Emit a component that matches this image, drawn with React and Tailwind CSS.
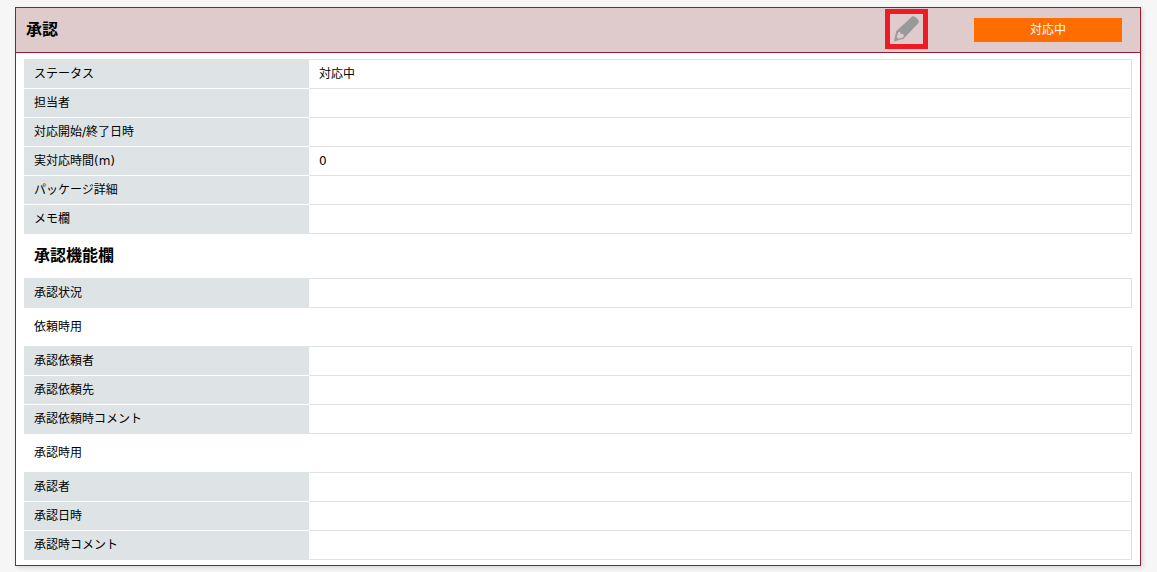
import React from 'react';

const basicRows = [
  { label: 'ステータス', value: '対応中' },
  { label: '担当者', value: '' },
  { label: '対応開始/終了日時', value: '' },
  { label: '実対応時間(m)', value: '0' },
  { label: 'パッケージ詳細', value: '' },
  { label: 'メモ欄', value: '' },
];

const statusRows = [{ label: '承認状況', value: '' }];

const requestRows = [
  { label: '承認依頼者', value: '' },
  { label: '承認依頼先', value: '' },
  { label: '承認依頼時コメント', value: '' },
];

const approvalRows = [
  { label: '承認者', value: '' },
  { label: '承認日時', value: '' },
  { label: '承認時コメント', value: '' },
];

function PencilIcon() {
  return (
    <svg width="25" height="26" viewBox="0 0 25 26" aria-hidden="true">
      <path
        fill="#999"
        fillRule="evenodd"
        d="M0 25.4 L2.2 15.2 L17.6 1 Q19.4 -0.6 21.2 1 L24.2 3.8 Q25.6 5.6 24 7.6 L9.6 22.8 Z M4 16.6 L2.7 21.4 L4.2 22.8 L9 21.4 L10 19 L8.2 17.6 L6.6 18.4 L6.2 15.8 Z"
      />
    </svg>
  );
}

function DetailTable({ label, rows }) {
  return (
    <table aria-label={label} className="w-full table-fixed border-separate border-spacing-0">
      <tbody>
        {rows.map((row) => (
          <tr key={row.label} className="group h-[29px] last:h-[30px]">
            <th
              scope="row"
              className="w-[285px] border-t border-white bg-[#dee4e6] px-2.5 text-left font-normal group-first:border-[#dee4e6] group-last:border-b group-last:border-b-[#dee4e6]"
            >
              {row.label}
            </th>
            <td className="border-t border-r border-[#dee2e4] px-2.5 group-last:border-b">{row.value}</td>
          </tr>
        ))}
      </tbody>
    </table>
  );
}

export default function App() {
  return (
    <div className="min-h-screen bg-[#f6f6f6] pt-[7px] pr-4 pb-1.5 pl-[15px] font-['DejaVu_Sans','Noto_Sans_CJK_JP',sans-serif] text-xs text-black">
      <section className="border border-[#961c34] bg-white shadow-[2px_2px_4px_rgba(0,0,0,0.12)]">
        <header className="flex h-[45px] items-center border-b border-[#961c34] bg-[#dfcbcc] pr-[18px] pl-2.5">
          <h2 className="flex-1 text-base font-bold">承認</h2>
          <button
            type="button"
            aria-label="編集"
            className="mt-px mr-[46px] flex h-10 w-[43px] items-center justify-center self-start border-5 border-[#ed1c24]"
          >
            <PencilIcon />
          </button>
          <button type="button" className="h-6 w-[148px] bg-[#ff6c00] text-white">
            対応中
          </button>
        </header>

        <div className="px-2 pt-1.5 pb-[5px]">
          <DetailTable label="承認" rows={basicRows} />
          <h3 className="flex h-11 items-center px-2.5 text-base font-bold">承認機能欄</h3>
          <DetailTable label="承認機能欄" rows={statusRows} />
          <h4 className="flex h-[38px] items-center px-2.5">依頼時用</h4>
          <DetailTable label="依頼時用" rows={requestRows} />
          <h4 className="flex h-[38px] items-center px-2.5">承認時用</h4>
          <DetailTable label="承認時用" rows={approvalRows} />
        </div>
      </section>
    </div>
  );
}
